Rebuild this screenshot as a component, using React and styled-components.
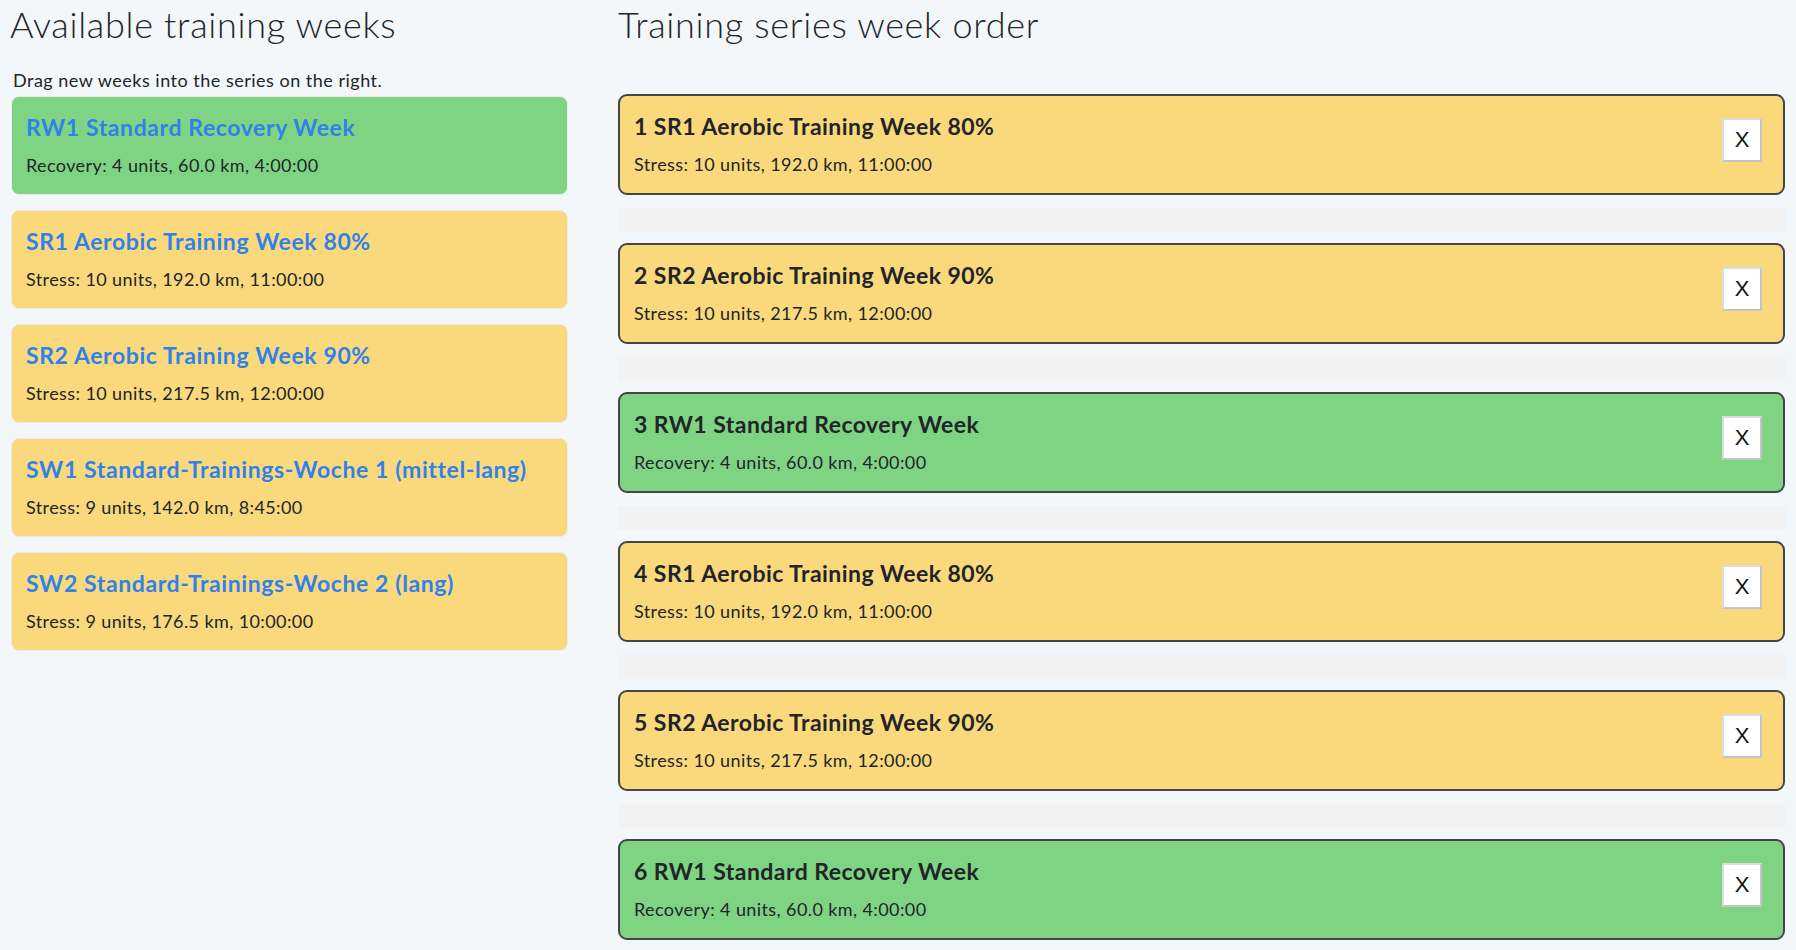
import React from "react";
import styled, { createGlobalStyle } from "styled-components";

const Global = createGlobalStyle`
  html, body { margin: 0; padding: 0; background: #f4f7fa; }
  body { font-family: Lato, "Open Sans", "Liberation Sans", sans-serif; color: #212529; }
  * { box-sizing: border-box; }
`;

const Page = styled.div`
  display: grid;
  grid-template-columns: 558px 1fr;
  column-gap: 50px;
  padding: 0 11px 0 10px;
  min-height: 950px;
`;

const Column = styled.section`
  display: flex;
  flex-direction: column;
`;

const Heading = styled.h2`
  margin: 0;
  padding-top: 3px;
  font-size: 36px;
  font-weight: 300;
  line-height: 42px;
  letter-spacing: 0.7px;
`;

const Hint = styled.p`
  margin: 24px 0 5px 3px;
  font-size: 18px;
  line-height: 22px;
  font-weight: 400;
  letter-spacing: 0.5px;
`;

const SourceList = styled.div`
  display: flex;
  flex-direction: column;
  gap: 15px;
  padding-left: 1px;
`;

const SourceCard = styled.div`
  height: 99px;
  padding: 17px 14px 0 14px;
  border-radius: 8px;
  border: 1px solid #e9edf0;
  background: ${(p) => (p.$kind === "recovery" ? "#7fd483" : "#fad97c")};
`;

const SourceTitle = styled.div`
  font-size: 23px;
  line-height: 27px;
  font-weight: 700;
  letter-spacing: 0.6px;
  color: #3181ea;
`;

const Meta = styled.div`
  margin-top: ${(p) => p.$gap}px;
  font-size: 18px;
  line-height: 22px;
  font-weight: 400;
  letter-spacing: 0.4px;
  color: #212529;
`;

const SeriesList = styled.div`
  display: flex;
  flex-direction: column;
  margin-top: 49px;
`;

const SeriesCard = styled.div`
  height: 101px;
  display: flex;
  align-items: flex-start;
  padding: 17px 21px 0 14px;
  border: 2px solid #444546;
  border-radius: 9px;
  background: ${(p) => (p.$kind === "recovery" ? "#7fd483" : "#fad97c")};
`;

const SeriesText = styled.div`
  flex: 1;
`;

const SeriesTitle = styled.div`
  font-size: 23px;
  line-height: 27px;
  font-weight: 700;
  letter-spacing: 0.45px;
  color: #212529;
`;

const RemoveButton = styled.button`
  margin-top: 5px;
  width: 40px;
  height: 44px;
  padding: 0;
  background: #fff;
  border: 2px solid;
  border-color: #dcdcdc #c4c4c4 #c4c4c4 #dcdcdc;
  font-family: "Liberation Sans", Arial, sans-serif;
  font-size: 22px;
  font-weight: 400;
  color: #111;
  cursor: pointer;
`;

const DropZone = styled.div`
  height: 24px;
  margin: 13px 0 11px;
  background: #f2f2f2;
`;

const available = [
  { code: "RW1", name: "Standard Recovery Week", kind: "recovery", meta: "Recovery: 4 units, 60.0 km, 4:00:00" },
  { code: "SR1", name: "Aerobic Training Week 80%", kind: "stress", meta: "Stress: 10 units, 192.0 km, 11:00:00" },
  { code: "SR2", name: "Aerobic Training Week 90%", kind: "stress", meta: "Stress: 10 units, 217.5 km, 12:00:00" },
  { code: "SW1", name: "Standard-Trainings-Woche 1 (mittel-lang)", kind: "stress", meta: "Stress: 9 units, 142.0 km, 8:45:00" },
  { code: "SW2", name: "Standard-Trainings-Woche 2 (lang)", kind: "stress", meta: "Stress: 9 units, 176.5 km, 10:00:00" },
];

const series = [1, 2, 0, 1, 2, 0].map((i) => available[i]);

export default function App() {
  return (
    <>
      <Global />
      <Page>
        <Column>
          <Heading>Available training weeks</Heading>
          <Hint>Drag new weeks into the series on the right.</Hint>
          <SourceList>
            {available.map((w) => (
              <SourceCard key={w.code} $kind={w.kind}>
                <SourceTitle>{w.code} {w.name}</SourceTitle>
                <Meta $gap={13}>{w.meta}</Meta>
              </SourceCard>
            ))}
          </SourceList>
        </Column>
        <Column>
          <Heading>Training series week order</Heading>
          <SeriesList>
            {series.map((w, i) => (
              <React.Fragment key={i}>
                <SeriesCard $kind={w.kind}>
                  <SeriesText>
                    <SeriesTitle>{i + 1} {w.code} {w.name}</SeriesTitle>
                    <Meta $gap={13}>{w.meta}</Meta>
                  </SeriesText>
                  <RemoveButton>X</RemoveButton>
                </SeriesCard>
                <DropZone />
              </React.Fragment>
            ))}
          </SeriesList>
        </Column>
      </Page>
    </>
  );
}
